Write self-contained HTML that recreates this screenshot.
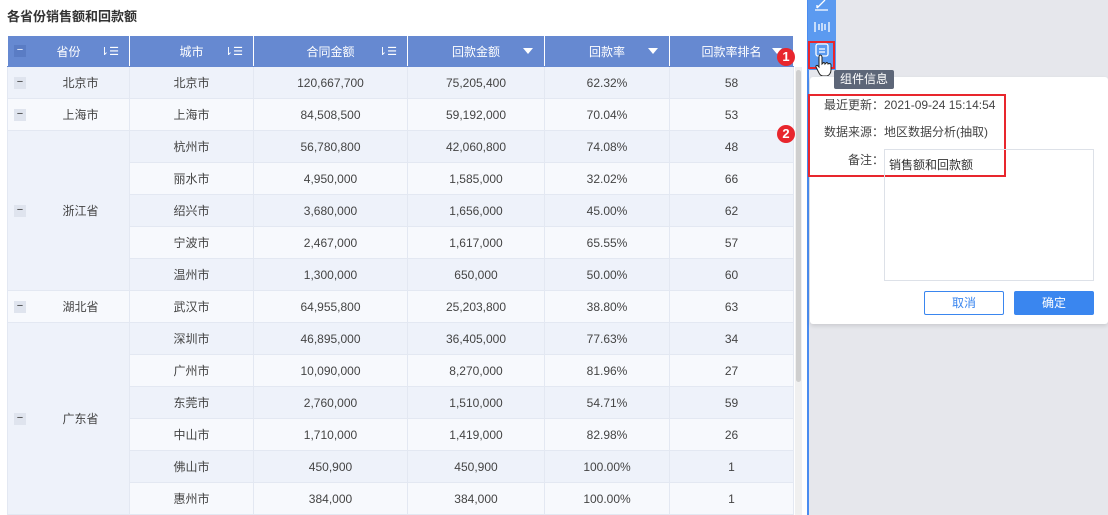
<!DOCTYPE html>
<html><head><meta charset="utf-8"><style>
*{margin:0;padding:0;box-sizing:border-box}
body{width:1108px;height:515px;overflow:hidden;background:#fff;font-family:"Liberation Sans","Noto Sans CJK SC",sans-serif;font-size:12px;color:#444;position:relative}
.title{position:absolute;left:7px;top:6px;font-size:13px;font-weight:bold;color:#333}
table{position:absolute;left:7px;top:35px;border-collapse:collapse;table-layout:fixed;width:786px}
td,th{border:1px solid #e3e8f2;text-align:center;height:32px;padding:0;position:relative}
th{background:#6689d1;color:#fff;font-weight:normal;border-color:#fff #fff #6689d1 #fff;height:31px}
tr.a td{background:#eef2fa}tr.b td{background:#f7f9fd}
td.p{background:#eef2fa!important;padding-left:24px}
.m{position:absolute;left:6px;top:50%;margin-top:-6px;width:12px;height:12px;background:#dfe4ee;color:#333;font-size:11px;line-height:11px}
th .m{background:#5a7cc4;color:#fff}
.s{position:absolute;right:10px;top:9px;font-size:11px}
.t{position:absolute;right:11px;top:12px;width:0;height:0;border-left:5px solid transparent;border-right:5px solid transparent;border-top:6px solid #fff}
.sb{position:absolute;left:795px;top:67px;width:7px;height:448px;background:#f0f0f0}
.sb i{position:absolute;left:1px;top:3px;width:5px;height:312px;background:#cfcfcf;border-radius:3px}
.gray{position:absolute;left:809px;top:0;width:299px;height:515px;background:#e6e7ec}
.vl{position:absolute;left:807px;top:0;width:2px;height:515px;background:#4a8cf0}
.tb{position:absolute;left:808px;top:0;width:28px;height:70px;background:#5b9af0}
.pop{position:absolute;left:810px;top:77px;width:298px;height:247px;background:#fff;border-radius:3px;box-shadow:0 2px 4px rgba(0,0,0,.12)}
.tip{position:absolute;left:834px;top:70px;width:60px;height:19px;background:#5d6678;color:#fff;font-size:12px;line-height:19px;text-align:center;border-radius:2px}
.red{position:absolute;border:2px solid #e8262d}
.badge{position:absolute;width:18px;height:18px;border-radius:50%;background:#e8262d;color:#fff;font-weight:bold;font-size:13px;line-height:18px;text-align:center}
.lab{position:absolute;font-size:12px;color:#444}
.ta{position:absolute;left:884px;top:149px;width:210px;height:132px;border:1px solid #dde1e8;padding:6px 4px;font-size:12px;color:#333}
.btn{position:absolute;top:291px;width:80px;height:24px;line-height:22px;text-align:center;font-size:12px;border-radius:2px}
</style></head><body>
<div class="title">各省份销售额和回款额</div>
<table>
<colgroup><col style="width:122px"><col style="width:124px"><col style="width:154px"><col style="width:137px"><col style="width:125px"><col style="width:124px"></colgroup>
<tr><th><span class="m">−</span>省份<span class="s">⇂☰</span></th><th>城市<span class="s">⇂☰</span></th><th>合同金额<span class="s">⇂☰</span></th><th>回款金额<span class="t"></span></th><th>回款率<span class="t"></span></th><th>回款率排名<span class="t"></span></th></tr>
<tr class="a"><td class="p"><span class="m">−</span>北京市</td><td>北京市</td><td>120,667,700</td><td>75,205,400</td><td>62.32%</td><td>58</td></tr>
<tr class="b"><td class="p" style="background:#f7f9fd!important"><span class="m">−</span>上海市</td><td>上海市</td><td>84,508,500</td><td>59,192,000</td><td>70.04%</td><td>53</td></tr>
<tr class="a"><td class="p" rowspan="5"><span class="m">−</span>浙江省</td><td>杭州市</td><td>56,780,800</td><td>42,060,800</td><td>74.08%</td><td>48</td></tr>
<tr class="b"><td>丽水市</td><td>4,950,000</td><td>1,585,000</td><td>32.02%</td><td>66</td></tr>
<tr class="a"><td>绍兴市</td><td>3,680,000</td><td>1,656,000</td><td>45.00%</td><td>62</td></tr>
<tr class="b"><td>宁波市</td><td>2,467,000</td><td>1,617,000</td><td>65.55%</td><td>57</td></tr>
<tr class="a"><td>温州市</td><td>1,300,000</td><td>650,000</td><td>50.00%</td><td>60</td></tr>
<tr class="b"><td class="p" style="background:#f7f9fd!important"><span class="m">−</span>湖北省</td><td>武汉市</td><td>64,955,800</td><td>25,203,800</td><td>38.80%</td><td>63</td></tr>
<tr class="a"><td class="p" rowspan="6"><span class="m">−</span>广东省</td><td>深圳市</td><td>46,895,000</td><td>36,405,000</td><td>77.63%</td><td>34</td></tr>
<tr class="b"><td>广州市</td><td>10,090,000</td><td>8,270,000</td><td>81.96%</td><td>27</td></tr>
<tr class="a"><td>东莞市</td><td>2,760,000</td><td>1,510,000</td><td>54.71%</td><td>59</td></tr>
<tr class="b"><td>中山市</td><td>1,710,000</td><td>1,419,000</td><td>82.98%</td><td>26</td></tr>
<tr class="a"><td>佛山市</td><td>450,900</td><td>450,900</td><td>100.00%</td><td>1</td></tr>
<tr class="b"><td>惠州市</td><td>384,000</td><td>384,000</td><td>100.00%</td><td>1</td></tr>
</table>
<div class="sb"><i></i></div>
<div class="gray"></div>
<div class="vl"></div>
<div class="tb">
<svg width="28" height="70" viewBox="0 0 28 70" fill="none" stroke="#fff" stroke-width="1.3">
<path d="M9 8 L17 0 M9 8 L9 5 M7 10 L20 10"/>
<path d="M7 22v10M21 22v10M11 24v6M17 24v6M14 23v8"/>
<rect x="8" y="44" width="12" height="12" rx="2"/><path d="M11 49h6M11 52h6"/>
</svg></div>
<div class="red" style="left:808px;top:41px;width:27px;height:28px"></div>
<svg style="position:absolute;left:815px;top:54px" width="18" height="22" viewBox="0 0 18 22"><path d="M5 1c1 0 2 1 2 2v7l1-1c1-1 2 0 2 1l1-1c1-1 2 0 2 1l1-.5c1 0 2 .5 2 1.5v5c0 3-2 6-5 6H8c-2 0-3-1-4-3L1 13c-.5-1 .5-2 1.5-1.5L4 13V3c0-1 .5-2 1-2z" fill="#fff" stroke="#222" stroke-width="1"/></svg>
<div class="badge" style="left:777px;top:48px">1</div>
<div class="badge" style="left:777px;top:125px">2</div>
<div class="pop"></div>
<div class="tip">组件信息</div>
<div class="red" style="left:808px;top:94px;width:198px;height:83px"></div>
<div class="lab" style="left:824px;top:96px">最近更新：2021-09-24 15:14:54</div>
<div class="lab" style="left:824px;top:123px">数据来源：地区数据分析(抽取)</div>
<div class="lab" style="left:848px;top:151px">备注：</div>
<div class="ta">销售额和回款额</div>
<div class="btn" style="left:924px;border:1px solid #3a86ef;color:#3a86ef;background:#fff">取消</div>
<div class="btn" style="left:1014px;background:#3a86ef;color:#fff;line-height:24px">确定</div>
</body></html>
